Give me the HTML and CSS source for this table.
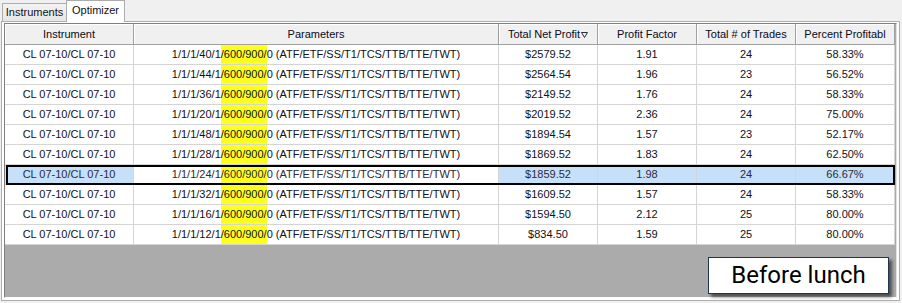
FILE: index.html
```html
<!DOCTYPE html>
<html>
<head>
<meta charset="utf-8">
<link rel="stylesheet" href="styles.css">
</head>
<body>
<div class="tabs">
  <div class="tab">Instruments</div>
  <div class="tab active">Optimizer</div>
</div>
<div class="panel">
  <div class="grid">
    <div class="row head">
      <div class="c">Instrument</div>
      <div class="c">Parameters</div>
      <div class="c">Total Net Profit<svg class="sort" width="7" height="6" viewBox="0 0 7 6"><polygon points="0.5,0.5 6.5,0.5 3.5,5.5" fill="none" stroke="#2a2a3a" stroke-width="1"/></svg></div>
      <div class="c">Profit Factor</div>
      <div class="c">Total # of Trades</div>
      <div class="c">Percent Profitabl</div>
    </div>
    <div class="row"><div class="c">CL 07-10/CL 07-10</div><div class="c p">1/1/1/40/1<mark>/600/900/</mark>0 (ATF/ETF/SS/T1/TCS/TTB/TTE/TWT)</div><div class="c">$2579.52</div><div class="c">1.91</div><div class="c">24</div><div class="c">58.33%</div></div>
    <div class="row"><div class="c">CL 07-10/CL 07-10</div><div class="c p">1/1/1/44/1<mark>/600/900/</mark>0 (ATF/ETF/SS/T1/TCS/TTB/TTE/TWT)</div><div class="c">$2564.54</div><div class="c">1.96</div><div class="c">23</div><div class="c">56.52%</div></div>
    <div class="row"><div class="c">CL 07-10/CL 07-10</div><div class="c p">1/1/1/36/1<mark>/600/900/</mark>0 (ATF/ETF/SS/T1/TCS/TTB/TTE/TWT)</div><div class="c">$2149.52</div><div class="c">1.76</div><div class="c">24</div><div class="c">58.33%</div></div>
    <div class="row"><div class="c">CL 07-10/CL 07-10</div><div class="c p">1/1/1/20/1<mark>/600/900/</mark>0 (ATF/ETF/SS/T1/TCS/TTB/TTE/TWT)</div><div class="c">$2019.52</div><div class="c">2.36</div><div class="c">24</div><div class="c">75.00%</div></div>
    <div class="row"><div class="c">CL 07-10/CL 07-10</div><div class="c p">1/1/1/48/1<mark>/600/900/</mark>0 (ATF/ETF/SS/T1/TCS/TTB/TTE/TWT)</div><div class="c">$1894.54</div><div class="c">1.57</div><div class="c">23</div><div class="c">52.17%</div></div>
    <div class="row"><div class="c">CL 07-10/CL 07-10</div><div class="c p">1/1/1/28/1<mark>/600/900/</mark>0 (ATF/ETF/SS/T1/TCS/TTB/TTE/TWT)</div><div class="c">$1869.52</div><div class="c">1.83</div><div class="c">24</div><div class="c">62.50%</div></div>
    <div class="row sel"><div class="c">CL 07-10/CL 07-10</div><div class="c p">1/1/1/24/1<mark>/600/900/</mark>0 (ATF/ETF/SS/T1/TCS/TTB/TTE/TWT)</div><div class="c">$1859.52</div><div class="c">1.98</div><div class="c">24</div><div class="c">66.67%</div></div>
    <div class="row"><div class="c">CL 07-10/CL 07-10</div><div class="c p">1/1/1/32/1<mark>/600/900/</mark>0 (ATF/ETF/SS/T1/TCS/TTB/TTE/TWT)</div><div class="c">$1609.52</div><div class="c">1.57</div><div class="c">24</div><div class="c">58.33%</div></div>
    <div class="row"><div class="c">CL 07-10/CL 07-10</div><div class="c p">1/1/1/16/1<mark>/600/900/</mark>0 (ATF/ETF/SS/T1/TCS/TTB/TTE/TWT)</div><div class="c">$1594.50</div><div class="c">2.12</div><div class="c">25</div><div class="c">80.00%</div></div>
    <div class="row"><div class="c">CL 07-10/CL 07-10</div><div class="c p">1/1/1/12/1<mark>/600/900/</mark>0 (ATF/ETF/SS/T1/TCS/TTB/TTE/TWT)</div><div class="c">$834.50</div><div class="c">1.59</div><div class="c">25</div><div class="c">80.00%</div></div>
    <div class="empty"><div class="note">Before lunch</div></div>
  </div>
</div>
</body>
</html>
```
FILE: styles.css
```css
* { box-sizing: border-box; }
html, body { margin: 0; padding: 0; }
body {
  width: 902px;
  height: 303px;
  overflow: hidden;
  background: #f0f0f0;
  font-family: "Liberation Sans", Arial, sans-serif;
  font-size: 11px;
  color: #101020;
}
.tabs {
  display: flex;
  align-items: flex-end;
  height: 21px;
  padding-left: 2px;
  position: relative;
  z-index: 1;
}
.tab {
  width: 65px;
  height: 18px;
  border: 1px solid #acacac;
  border-bottom: none;
  background: linear-gradient(#f3f3f3, #e6e6e6);
  text-align: center;
  line-height: 17px;
}
.tab.active {
  width: 59px;
  height: 22px;
  margin-left: -1px;
  margin-bottom: -1px;
  background: #fff;
  line-height: 19px;
}
.panel {
  margin-left: 1px;
  width: 899px;
  height: 280px;
  border: 1px solid #adadad;
  background: #fff;
  padding: 1px 2px 2px 2px;
}
.grid {
  width: 893px;
  height: 275px;
  border-left: 1px solid #7f7f7f;
  border-top: 1px solid #7f7f7f;
  border-right: 1px solid #e3e3e3;
  border-bottom: 1px solid #fff;
  background: #ababab;
  display: flex;
  flex-direction: column;
}
.row {
  display: grid;
  grid-template-columns: 129px 365px 99px 99px 99px 99px;
  width: 890px;
  height: 20px;
  position: relative;
  background: #fff;
}
.c {
  border-right: 1px solid #d5d5d5;
  border-bottom: 1px solid #d5d5d5;
  text-align: center;
  line-height: 19px;
  white-space: nowrap;
  overflow: hidden;
}
.head { height: 21px; background: #f0f0f0; }
.head .c {
  background: #f0f0f0;
  border-right: 1px solid #a0a0a0;
  border-bottom: 1px solid #a0a0a0;
  box-shadow: inset 1px 1px 0 #fff;
  line-height: 20px;
  color: #0a0a1a;
}
.sort { margin-left: 1px; vertical-align: 0; }
mark {
  background: #ffff1e;
  color: inherit;
  display: inline-block;
  line-height: 19px;
}
.sel .c { background: #c6e0fa; color: #2a2a3a; }
.sel .c.p { background: #fff; }
.sel::after {
  content: "";
  position: absolute;
  top: 0;
  bottom: 0;
  left: 1px;
  right: 0;
  border: 2px solid #000;
  pointer-events: none;
}
.empty {
  flex: 1;
  display: flex;
  justify-content: flex-end;
  align-items: flex-start;
  padding: 12px 7px 0 0;
}
.note {
  width: 181px;
  height: 37px;
  border: 1px solid #1f3552;
  background: #fff;
  box-shadow: 3px 3px 3px rgba(0, 0, 0, 0.55);
  font-family: Roboto, "Liberation Sans", sans-serif;
  font-size: 24px;
  line-height: 35px;
  text-align: center;
  color: #000;
}
```
